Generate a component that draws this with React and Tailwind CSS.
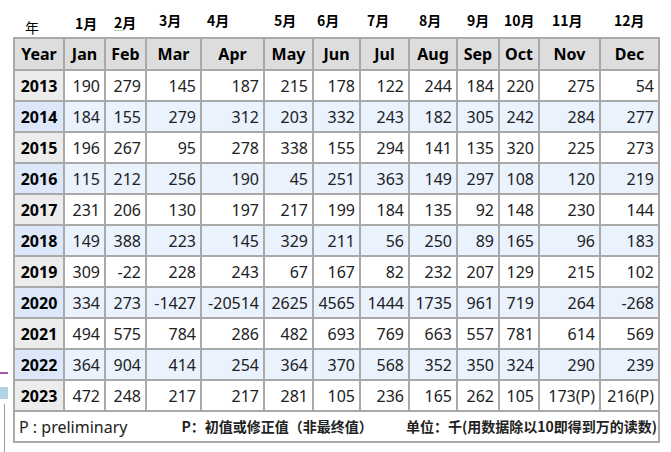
import React from "react";

const MONTHS = ["Jan", "Feb", "Mar", "Apr", "May", "Jun", "Jul", "Aug", "Sep", "Oct", "Nov", "Dec"];

// label above each column: [text, left offset, top offset]
const LABELS = [
  ["年", "pl-[10px] pt-[17px] font-normal text-[13px]"],
  ["1月", "pl-[10px] pt-[13px]"],
  ["2月", "pl-[8px] pt-[12px]"],
  ["3月", "pl-[12px] pt-[10px]"],
  ["4月", "pl-[5px] pt-[10px]"],
  ["5月", "pl-[9px] pt-[10px]"],
  ["6月", "pl-[3px] pt-[10px]"],
  ["7月", "pl-[6px] pt-[10px]"],
  ["8月", "pl-[9px] pt-[10px]"],
  ["9月", "pl-[9px] pt-[10px]"],
  ["10月", "pl-[4px] pt-[10px]"],
  ["11月", "pl-[12px] pt-[10px]"],
  ["12月", "pl-[13px] pt-[10px]"],
];

const DATA = [
  [2013, "190", "279", "145", "187", "215", "178", "122", "244", "184", "220", "275", "54"],
  [2014, "184", "155", "279", "312", "203", "332", "243", "182", "305", "242", "284", "277"],
  [2015, "196", "267", "95", "278", "338", "155", "294", "141", "135", "320", "225", "273"],
  [2016, "115", "212", "256", "190", "45", "251", "363", "149", "297", "108", "120", "219"],
  [2017, "231", "206", "130", "197", "217", "199", "184", "135", "92", "148", "230", "144"],
  [2018, "149", "388", "223", "145", "329", "211", "56", "250", "89", "165", "96", "183"],
  [2019, "309", "-22", "228", "243", "67", "167", "82", "232", "207", "129", "215", "102"],
  [2020, "334", "273", "-1427", "-20514", "2625", "4565", "1444", "1735", "961", "719", "264", "-268"],
  [2021, "494", "575", "784", "286", "482", "693", "769", "663", "557", "781", "614", "569"],
  [2022, "364", "904", "414", "254", "364", "370", "568", "352", "350", "324", "290", "239"],
  [2023, "472", "248", "217", "217", "281", "105", "236", "165", "262", "105", "173(P)", "216(P)"],
];

const COLS = "grid-cols-[48px_39px_39px_53px_61px_47px_45px_47px_46px_40px_38px_59px_57px]";
const FONT = "font-['Noto_Sans','Noto_Sans_CJK_SC',sans-serif]";
const CJK = "font-['Noto_Sans_CJK_SC','Noto_Sans',sans-serif]";

export default function App() {
  return (
    <div className={`relative w-[671px] h-[452px] bg-white overflow-hidden text-[#202122] ${FONT}`}>
      {/* bits of the page behind, cut off at the left edge */}
      <div className="absolute left-0 top-[372px] w-[8px] h-[2px] bg-[#a05aa8]" />
      <div className="absolute left-0 top-[387px] w-[8px] h-[12px] bg-[#b4d2e6]" />
      <div className="absolute left-[4px] top-[404px] w-[1px] h-[48px] bg-[#9a9a9a]" />

      <div className="pl-[13px]">
        <div className={`grid ${COLS} gap-x-[2px] px-[2px] h-[37px]`}>
          {LABELS.map(([t, cls], i) => (
            <div key={i} className={`relative ${CJK} font-bold text-[14px] leading-[20px] text-black ${cls}`}>
              {t}
              {i === 2 && <div className="absolute left-[8px] top-[30px] w-[10px] h-[1px] bg-[#a8d4b4]" />}
            </div>
          ))}
        </div>

        <div className={`grid ${COLS} gap-[2px] p-[2px] w-[647px] bg-[#a9a9a9]`}>
          <div className="h-[30px] bg-[#dddddd] flex items-center justify-center font-bold text-[16px] text-black">Year</div>
          {MONTHS.map((m) => (
            <div key={m} className="h-[30px] bg-[#dddddd] flex items-center justify-center font-bold text-[16px] text-black">{m}</div>
          ))}

          {DATA.map((row, r) => {
            const even = r % 2 === 1;
            return (
              <React.Fragment key={row[0]}>
                <div className={`h-[29px] flex items-center justify-center font-bold text-[16px] text-black ${even ? "bg-[#dce8fa]" : "bg-[#ececec]"}`}>
                  {row[0]}
                </div>
                {row.slice(1).map((v, c) => (
                  <div key={c} className={`h-[29px] flex items-center justify-end pr-[4px] text-[16px] ${even ? "bg-[#eaf2fe]" : "bg-white"}`}>
                    {v}
                  </div>
                ))}
              </React.Fragment>
            );
          })}

          <div className="col-span-full h-[29px] bg-white flex items-center pl-[4px] pr-[1px]">
            <span className="text-[16px]">P : preliminary</span>
            <span className={`ml-[54px] ${CJK} font-bold text-[14px] text-[#222]`}>P：初值或修正值（非最终值）</span>
            <span className={`ml-auto ${CJK} font-bold text-[14px] text-[#222]`}>单位：千(用数据除以10即得到万的读数)</span>
          </div>
        </div>
      </div>
    </div>
  );
}
